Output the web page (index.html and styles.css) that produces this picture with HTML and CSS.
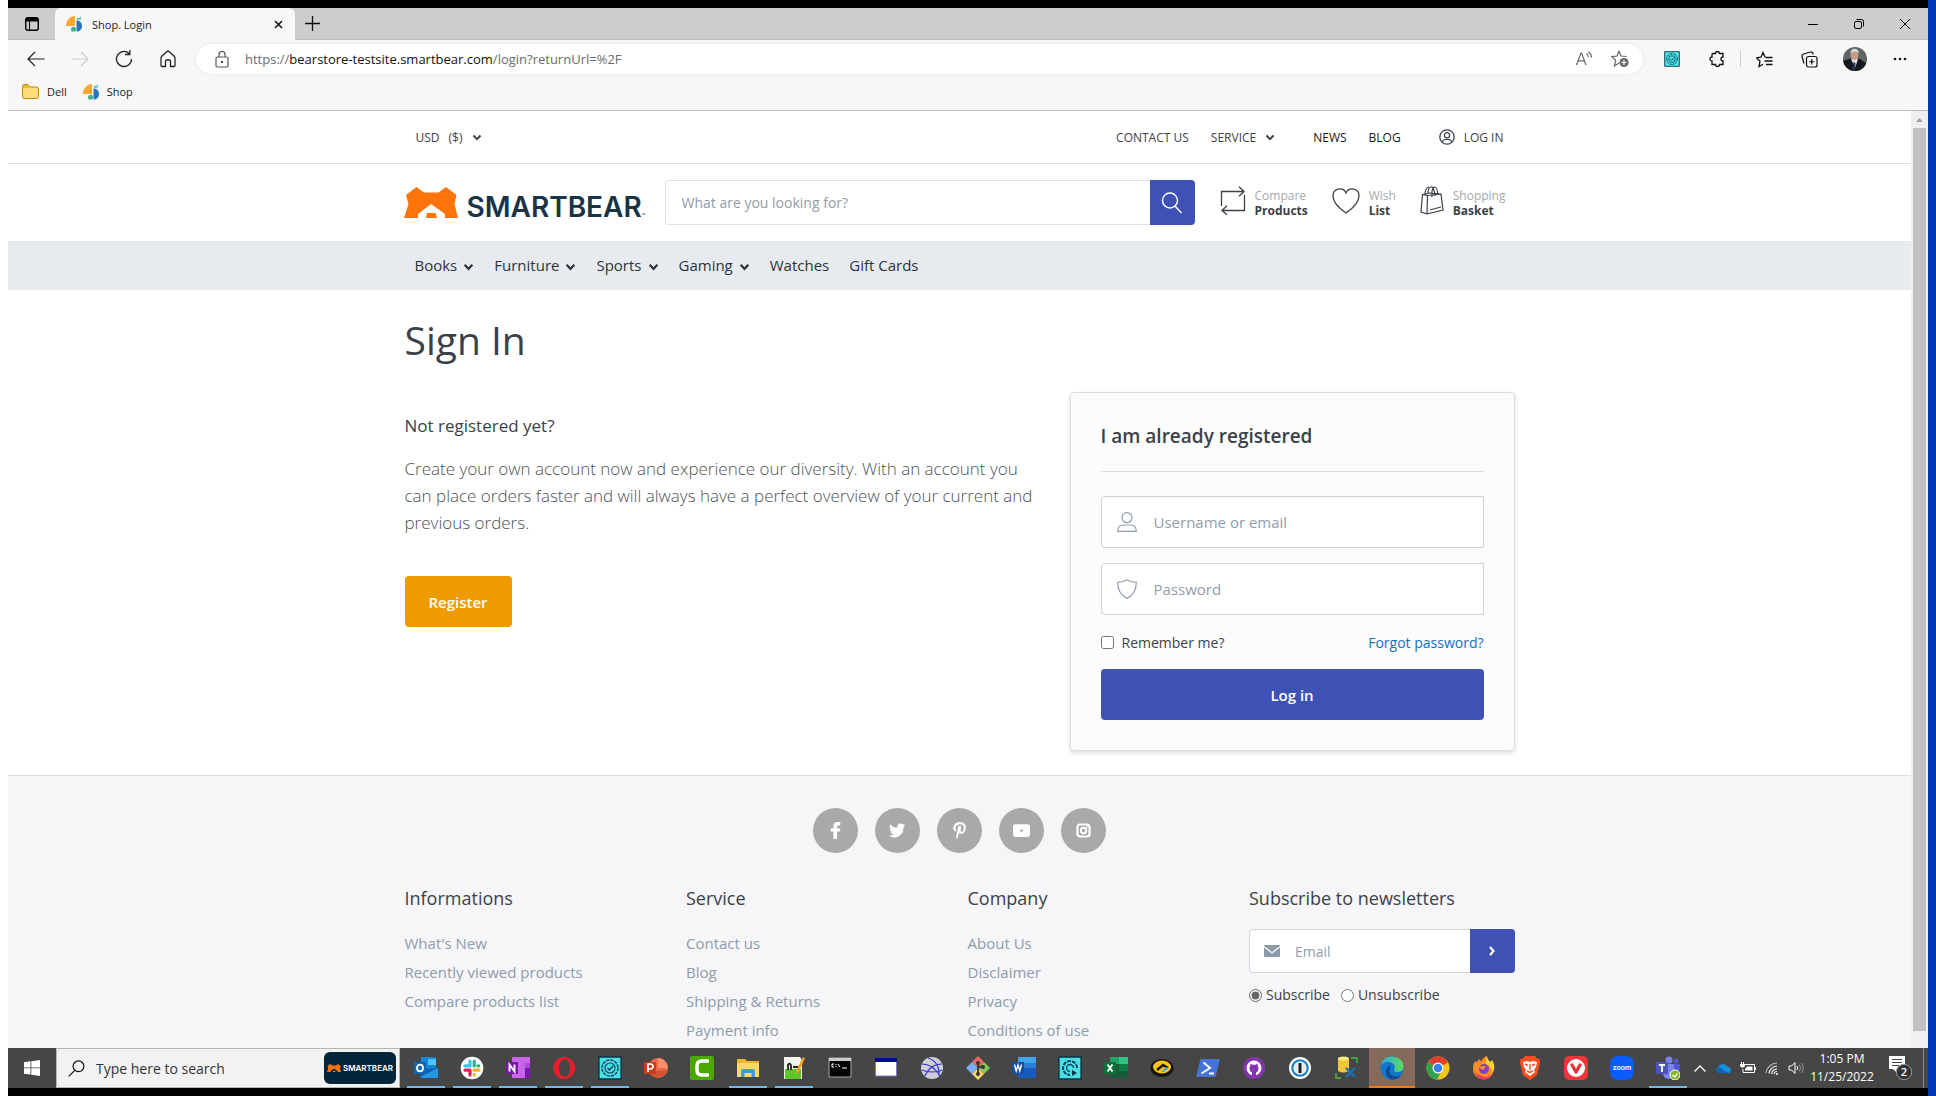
FILE: index.html
```
<!DOCTYPE html>
<html lang="en">
<head>
<meta charset="utf-8">
<title>Shop. Login</title>
<link rel="stylesheet" href="styles.css">
</head>
<body>
<svg class="sprite" aria-hidden="true">
  <symbol id="chev" viewBox="0 0 10 10"><path d="M1.500 3.500 5 7.100 8.500 3.500" fill="none" stroke="currentColor" stroke-width="2"/></symbol>
  <symbol id="shop" viewBox="0 0 16 16"><path d="M9 0v10H0C0 4.500 4 0 9 0z" fill="#f8a832"/><path d="M10.500 4.500c3 0 5.500 2 5.500 5.500s-2.500 5.500-5.500 5.500z" fill="#2b74b8"/><path d="M11 1.500A3 3 0 0 0 15 0v3.500l-4 .5z" fill="#54c3c0"/><circle cx="7.500" cy="13.300" r="2.500" fill="#3fb08a"/></symbol>
  <symbol id="bear" viewBox="0 0 54 31"><path d="M12.500 0 20 5.500h14.500L42 0l10.500 8-2 9L54 31H41v-4L27 17 14 27v4H0l4.500-14-2.500-9z" fill="#ff730b"/><path d="M23 26h8.500l1.500 5H22z" fill="#ff730b"/></symbol>
  <symbol id="seal" viewBox="0 0 24 24"><path d="M1 1h22v22H1z" fill="#4be0e8" stroke="#0c3444" stroke-width="1.300"/><circle cx="12" cy="12" r="8" fill="none" stroke="#0c4658" stroke-width="1.500" stroke-dasharray="3.200 1"/><circle cx="12" cy="12" r="5" fill="none" stroke="#0c4658" stroke-width="1.200"/><path d="m9.500 12 2 2 3.500-4" fill="none" stroke="#0c4658" stroke-width="1.400"/></symbol>
</svg>
<div class="desktop">
<div class="screen">

  <header class="browser">
    <div class="tabs">
      <button class="tabs-menu" aria-label="Tab actions"><svg width="14" height="14" viewBox="0 0 14 14"><rect x=".75" y=".75" width="12.500" height="12.500" rx="2" fill="none" stroke="#000" stroke-width="1.400"/><path d="M1 1h12v3.500H1z"/><path d="M4.500 4v9" stroke="#000"/></svg></button>
      <div class="tab"><svg width="16" height="16"><use href="#shop"/></svg><span>Shop. Login</span><button aria-label="Close tab"><svg width="9" height="9" viewBox="0 0 9 9"><path d="m1 1 7 7m0-7-7 7" stroke="#111" stroke-width="1.500"/></svg></button></div>
      <button class="new-tab" aria-label="New tab"><svg width="15" height="15" viewBox="0 0 15 15"><path d="M7.500 0v15M0 7.500h15" stroke="#111" stroke-width="1.300"/></svg></button>
      <div class="window-buttons">
        <button aria-label="Minimize"><svg width="10" height="10" viewBox="0 0 10 10"><path d="M0 5.500h10" stroke="#000"/></svg></button>
        <button aria-label="Restore"><svg width="10" height="10" viewBox="0 0 10 10"><rect x=".5" y="2.500" width="7" height="7" rx="1.500" fill="none" stroke="#000"/><path d="M2.500 .5h5a2 2 0 0 1 2 2v5" fill="none" stroke="#000"/></svg></button>
        <button aria-label="Close"><svg width="10" height="10" viewBox="0 0 10 10"><path d="m0 0 10 10M10 0 0 10" stroke="#000"/></svg></button>
      </div>
    </div>
    <div class="toolbar">
      <div class="nav-buttons">
        <button aria-label="Back"><svg width="18" height="16" viewBox="0 0 18 16"><path d="M8 1 1 8l7 7M1 8h16.500" fill="none" stroke="#222" stroke-width="1.200"/></svg></button>
        <button aria-label="Forward"><svg width="18" height="16" viewBox="0 0 18 16"><path d="m10 1 7 7-7 7m7-7H.5" fill="none" stroke="#ccc" stroke-width="1.200"/></svg></button>
        <button aria-label="Refresh"><svg width="18" height="18" viewBox="0 0 18 18"><path d="M16.500 9A7.500 7.500 0 1 1 14 3.400M14.800 0v4.500H10" fill="none" stroke="#222" stroke-width="1.300"/></svg></button>
        <button aria-label="Home"><svg width="16" height="18" viewBox="0 0 16 18"><path d="M1 8q0-1 1-2l5-4.500q1-1 2 0L14 6q1 1 1 2v7.500q0 1-1 1h-3.500V11q0-1-1-1h-3q-1 0-1 1v5.500H2q-1 0-1-1z" fill="none" stroke="#222" stroke-width="1.300"/></svg></button>
      </div>
      <div class="omnibox">
        <svg width="14" height="17" viewBox="0 0 14 17"><rect x="1" y="6" width="12" height="10" rx="1.500" fill="none" stroke="#555" stroke-width="1.200"/><path d="M4 6V3.500a3 3 0 0 1 6 0V6" fill="none" stroke="#555" stroke-width="1.200"/><circle cx="7" cy="11" r="1"/></svg>
        <div class="url">https://<b>bearstore-testsite.smartbear.com</b>/login?returnUrl=%2F</div>
        <button aria-label="Read aloud"><svg width="16" height="16" viewBox="0 0 16 16"><path d="m.5 14 4.500-12h.6L10 14M2.200 9.800h6.200M10.500 2.500q1.600 1.300 1.800 3.500M12.500 .7Q15.300 3 15.500 6.500" fill="none" stroke="#666" stroke-width="1.200"/></svg></button>
        <button aria-label="Add to favorites"><svg width="18" height="18" viewBox="0 0 18 18"><path d="m8 1 2 5 5.500.5M8 1 6 6l-5.300.6 4 3.700L3.500 16 8 13" fill="none" stroke="#666" stroke-width="1.200"/><circle cx="13" cy="12.500" r="4.600" fill="#666"/><path d="M13 10v5m-2.500-2.500h5" stroke="#fff" stroke-width="1.200"/></svg></button>
      </div>
      <div class="tools">
        <button aria-label="Extension"><svg width="16" height="16"><use href="#seal"/></svg></button>
        <button aria-label="Extensions"><svg width="16" height="16" viewBox="0 0 16 16"><path d="M4 2.500h2.500a2 2 0 0 1 4 0H14V6a2 2 0 0 0 0 4v3.500h-3.500a2 2 0 0 1-4 0H3V10a2 2 0 0 1 0-4V3.500q0-1 1-1z" fill="none" stroke="#111" stroke-width="1.300"/></svg></button>
        <i class="separator"></i>
        <button aria-label="Favorites"><svg width="17" height="17" viewBox="0 0 17 17"><path d="M9 6.200 7 1.500 5 6.200l-4.500.6L4 10.200 3 15.500l4-2.200M9.500 6.500h7M8.500 10H16.500M10 13.500h6.500" fill="none" stroke="#111" stroke-width="1.300"/></svg></button>
        <button aria-label="Collections"><svg width="17" height="17" viewBox="0 0 17 17"><rect x="5.500" y="5.500" width="10.500" height="10.500" rx="2" fill="none" stroke="#111" stroke-width="1.200"/><path d="M3 12.500 1 5.500q-.3-2 1.500-2.500l7-2q2-.3 2.500 1.500l.3 1M10.750 8v5.500M8 10.750h5.500" fill="none" stroke="#111" stroke-width="1.200"/></svg></button>
        <button aria-label="Profile"><svg width="24" height="24" viewBox="0 0 24 24"><defs><clipPath id="av"><circle cx="12" cy="12" r="12"/></clipPath></defs><g clip-path="url(#av)"><path d="M0 0h24v24H0z" fill="#5d6664"/><path d="M0 24V14l9-3 8 1 7 5v7z" fill="#14171d"/><path d="m8 12 3-1 4 1-3 9z" fill="#dfe3ea"/><path d="m10.500 15 2 1-.5 8H9z" fill="#26344f"/><ellipse cx="11.500" cy="8" rx="4" ry="5" fill="#c99b86"/><path d="M7.500 6Q8 1.500 12 1.800T15.500 6Q12 3 7.500 6z" fill="#d8d8d8"/></g></svg></button>
        <button aria-label="Settings"><svg width="14" height="4" viewBox="0 0 14 4"><g fill="#111"><circle cx="2" cy="2" r="1.300"/><circle cx="7" cy="2" r="1.300"/><circle cx="12" cy="2" r="1.300"/></g></svg></button>
      </div>
    </div>
    <div class="bookmarks">
      <a href="#"><svg width="17" height="15" viewBox="0 0 17 15"><path d="M.5 2.500q0-2 2-2H6L8 3h6.500q2 0 2 2v7.500q0 2-2 2h-12q-2 0-2-2z" fill="#ffdd7c" stroke="#b8860b"/><path d="M1 4h5l2-1-2-2H2Q1 1 1 2z" fill="#e8b92a"/></svg>Dell</a>
      <a href="#"><svg width="16" height="16"><use href="#shop"/></svg>Shop</a>
    </div>
  </header>

  <div class="viewport">
    <div class="page">
      <div class="topbar"><div class="container">
        <button class="currency">USD <span>($)</span> <svg width="10" height="10"><use href="#chev"/></svg></button>
        <nav>
          <a href="#">CONTACT US</a>
          <a href="#" class="service">SERVICE <svg width="10" height="10"><use href="#chev"/></svg></a>
          <a href="#" class="strong">NEWS</a>
          <a href="#" class="strong">BLOG</a>
          <a href="#" class="login-link"><svg width="16" height="16" viewBox="0 0 16 16"><circle cx="8" cy="8" r="7.200" fill="none" stroke="currentColor" stroke-width="1.300"/><circle cx="8" cy="6.300" r="2.600" fill="none" stroke="currentColor" stroke-width="1.200"/><path d="M3.400 13q.6-2.500 2.600-2.500h4q2 0 2.600 2.500" fill="none" stroke="currentColor" stroke-width="1.200"/></svg>LOG IN</a>
        </nav>
      </div></div>

      <div class="masthead"><div class="container">
        <a href="#" class="logo" aria-label="SmartBear"><svg width="54" height="31"><use href="#bear"/></svg><span>SMARTBEAR</span><small>™</small></a>
        <form class="search">
          <input type="text" placeholder="What are you looking for?" aria-label="Search">
          <button type="button" aria-label="Search"><svg width="22" height="22" viewBox="0 0 22 22"><circle cx="9" cy="8.500" r="7.500" fill="none" stroke="#fff" stroke-width="1.400"/><path d="m14 14 6.500 7" stroke="#fff" stroke-width="1.400"/></svg></button>
        </form>
        <div class="shop-tools">
          <a href="#"><svg width="26" height="29" viewBox="0 0 26 29"><path d="M1.500 20V5.500H24M19 .7l5 4.800-5 4.800M24.500 9v15.500H2M7 19.700l-5 4.800 5 4.300" fill="none" stroke="currentColor" stroke-width="1.300"/></svg><span>Compare<b>Products</b></span></a>
          <a href="#"><svg width="28" height="26" viewBox="0 0 28 26"><path d="M14 25Q1 16 1 8a6.800 6.800 0 0 1 13-3A6.800 6.800 0 0 1 27 8q0 8-13 17z" fill="none" stroke="currentColor" stroke-width="1.300"/></svg><span>Wish<b>List</b></span></a>
          <a href="#"><svg width="24" height="29" viewBox="0 0 24 29"><path d="m2.500 8.500 7-1.500 11.500 1L23 24 7 28l-6-2zM2.500 8.500l5 1L7 28M7.500 9.500 21 8M8 7.500q0-6 3-6.500t4 9M5 8q0-6 4-7M12 11V5q1-4 3-4t3 8M10 24l11-3" fill="none" stroke="currentColor" stroke-width="1.200"/></svg><span>Shopping<b>Basket</b></span></a>
        </div>
      </div></div>

      <nav class="mainnav"><div class="container">
        <a href="#">Books <svg width="11" height="11"><use href="#chev"/></svg></a>
        <a href="#">Furniture <svg width="11" height="11"><use href="#chev"/></svg></a>
        <a href="#">Sports <svg width="11" height="11"><use href="#chev"/></svg></a>
        <a href="#">Gaming <svg width="11" height="11"><use href="#chev"/></svg></a>
        <a href="#">Watches</a>
        <a href="#">Gift Cards</a>
      </div></nav>

      <main class="container">
        <h1>Sign In</h1>
        <div class="columns">
          <section class="register">
            <h2>Not registered yet?</h2>
            <p>Create your own account now and experience our diversity. With an account you can place orders faster and will always have a perfect overview of your current and previous orders.</p>
            <button class="btn btn-warning">Register</button>
          </section>
          <form class="card">
            <h2>I am already registered</h2>
            <label class="field"><svg width="20" height="20" viewBox="0 0 20 20"><circle cx="10" cy="5.700" r="5" fill="none" stroke="currentColor" stroke-width="1.200"/><path d="M.7 19.400q0-6.400 5.500-6.400h7.600q5.500 0 5.500 6.400z" fill="none" stroke="currentColor" stroke-width="1.200"/></svg><input type="text" placeholder="Username or email" aria-label="Username or email"></label>
            <label class="field"><svg width="20" height="20" viewBox="0 0 20 20"><path d="M10 .7q4 2.600 9.300 2.600Q19.300 15 10 19.400.7 15 .7 3.300 6 3.300 10 .7z" fill="none" stroke="currentColor" stroke-width="1.200"/></svg><input type="password" placeholder="Password" aria-label="Password"></label>
            <div class="options"><label><input type="checkbox"> Remember me?</label><a href="#">Forgot password?</a></div>
            <button type="button" class="btn btn-primary">Log in</button>
          </form>
        </div>
      </main>

      <footer>
        <div class="social">
          <a href="#" aria-label="Facebook"><svg viewBox="0 0 16 16"><path d="M6 16V9H3.500V6H6V4q0-4 4-4h2.500v3H11q-1.500 0-1.500 1.500V6h3L12 9H9.500v7z"/></svg></a>
          <a href="#" aria-label="Twitter"><svg viewBox="0 0 16 16"><path d="M0 13q2.800.1 4.700-1.400-2.300-.2-3-2.300h1.400Q.6 8.500.6 6l1.400.4Q-.3 4.300 1.100 2 4 5.300 7.900 5.400 7.200 1.800 10.500 1.300q1.400 0 2.400 1l2-.8-1.400 1.800 1.900-.5-1.700 1.700Q14 9 11 12T4.900 14.500Q2.300 14.500 0 13z"/></svg></a>
          <a href="#" aria-label="Pinterest"><svg viewBox="0 0 16 16"><path d="M8.400 0Q14 .3 14 5.300 13.400 11 9.500 11q-1.400 0-2-1L6.500 14q-.4 1.300-1.200 2Q4.600 14 5.300 11.500L6.500 6.300Q6.500 3.500 8.400 3.500q2 .3.800 3.300-.7 2.200.8 2.400 2 0 2-4Q11.800 2 8.300 2 4.500 2.400 4.300 6l.6 2-.6 1.200Q2 8.500 2 5.500 2.800.3 8.400 0z"/></svg></a>
          <a href="#" aria-label="YouTube"><svg viewBox="0 0 16 16"><path fill-rule="evenodd" d="M2 2h12q2 0 2 2v8q0 2-2 2H2q-2 0-2-2V4q0-2 2-2zm5 4.500v3.200L10 8z"/></svg></a>
          <a href="#" aria-label="Instagram"><svg viewBox="0 0 16 16"><rect x="2.300" y="2.300" width="11.400" height="11.400" rx="2.600" fill="none" stroke="#fff" stroke-width="2"/><circle cx="8" cy="8" r="2.600" fill="none" stroke="#fff" stroke-width="1.700"/><circle cx="11.300" cy="4.700" r=".8"/></svg></a>
        </div>
        <div class="container foot-cols">
          <section><h3>Informations</h3><a href="#">What's New</a><a href="#">Recently viewed products</a><a href="#">Compare products list</a></section>
          <section><h3>Service</h3><a href="#">Contact us</a><a href="#">Blog</a><a href="#">Shipping &amp; Returns</a><a href="#">Payment info</a></section>
          <section><h3>Company</h3><a href="#">About Us</a><a href="#">Disclaimer</a><a href="#">Privacy</a><a href="#">Conditions of use</a></section>
          <section><h3>Subscribe to newsletters</h3>
            <div class="newsletter"><svg width="16" height="12" viewBox="0 0 16 12"><path d="M0 1q0-1 1-1h14q1 0 1 1L8 7z" fill="#8d9bab"/><path d="m0 2.500 8 6 8-6V11q0 1-1 1H1q-1 0-1-1z" fill="#8d9bab"/></svg><input type="email" placeholder="Email" aria-label="Email"><button aria-label="Send"><svg width="8" height="10" viewBox="0 0 8 10"><path d="m2 1 3.500 4L2 9" fill="none" stroke="#fff" stroke-width="2.200"/></svg></button></div>
            <div class="choices"><label><input type="radio" name="n" checked>Subscribe</label><label><input type="radio" name="n">Unsubscribe</label></div>
          </section>
        </div>
      </footer>
    </div>
    <div class="scrollbar"><svg width="7" height="4" viewBox="0 0 7 4"><path d="M3.500 0 7 4H0z" fill="#a0a0a0"/></svg><i></i></div>
  </div>

  <div class="taskbar">
    <button class="start" aria-label="Start"><svg width="16" height="16" viewBox="0 0 16 16"><path d="M0 2.200 6.500 1.300v6.200H0zM7.300 1.200 16 0v7.500H7.300zM0 8.300h6.500v6.300L0 13.800zM7.300 8.300H16V16l-8.700-1.300z" fill="#fff"/></svg></button>
    <label class="task-search"><svg width="17" height="17" viewBox="0 0 17 17"><circle cx="10.500" cy="6.300" r="5.400" fill="none" stroke="#111" stroke-width="1.200"/><path d="m6.800 10.300-6 6" stroke="#111" stroke-width="1.200"/></svg><input type="text" placeholder="Type here to search" aria-label="Type here to search"><span class="badge"><svg width="14" height="8"><use href="#bear"/></svg>SMARTBEAR</span></label>
    <div class="apps">
      <button class="open" aria-label="Outlook"><svg viewBox="0 0 24 24"><path d="M7 1h15v13H7z" fill="#1684d8"/><path d="M14 3h8v6h-8z" fill="#50c4f5"/><path d="m6 13 18-1v10H8q-2 0-2-2z" fill="#2496e0"/><path d="m24 12-18 9V13z" fill="#0e5fae"/><path d="M0 6h12v12H0z" fill="#0a66b8"/><ellipse cx="6" cy="12" rx="3" ry="3.300" fill="none" stroke="#fff" stroke-width="1.800"/></svg></button>
      <button class="open" aria-label="Slack"><svg viewBox="0 0 24 24"><circle cx="12" cy="12" r="11.300" fill="#fff"/><g stroke-width="3.200" stroke-linecap="round"><path d="M10 5v5M5 9.800h5" stroke="#36c5f0"/><path d="M14.200 5v5M18.800 9.800h-1" stroke="#2eb67d"/><path d="M14 14.200h5M14.200 18.500v.5" stroke="#ecb22e"/><path d="M5 14.200h5M10 14.200v4.800" stroke="#e01e5a"/></g></svg></button>
      <button class="open" aria-label="OneNote"><svg viewBox="0 0 24 24"><path d="M6 1h18v21H6z" fill="#ca64ea"/><path d="M19 7h5v5h-5z" fill="#ae4bd5"/><path d="M19 12h5v10h-5z" fill="#7719aa"/><path d="M0 6h12v12H0z" fill="#7719aa"/><path d="M3.500 15.500v-7l5 7v-7" fill="none" stroke="#fff" stroke-width="1.800"/></svg></button>
      <button class="open" aria-label="Opera"><svg viewBox="0 0 24 24"><path fill-rule="evenodd" d="M12 1a11 11 0 1 1 0 22 11 11 0 0 1 0-22zm1 2.500C9 3.500 7 7 7 12s2 8.500 6 8.500 5-4 5-8.500-1-8.500-5-8.500z" fill="#e81d2c"/></svg></button>
      <button class="open" aria-label="TestComplete"><svg><use href="#seal"/></svg></button>
      <button aria-label="PowerPoint"><svg viewBox="0 0 24 24"><circle cx="14" cy="12" r="10" fill="#ed6c47"/><path d="M14 2a10 10 0 0 1 10 10H14z" fill="#ff8f6b"/><path d="M4.500 14.500h19A10 10 0 0 1 4.500 14.500z" fill="#d35230"/><path d="M0 6h12v12H0z" fill="#c43e1c"/><path d="M4 16V8h2.500a2 2 0 0 1 0 5H4" fill="none" stroke="#fff" stroke-width="1.700"/></svg></button>
      <button aria-label="Camtasia"><svg viewBox="0 0 24 24"><rect width="24" height="24" rx="2" fill="#4ba800"/><path d="M19 5h-7q-5 0-5 5v4q0 5 5 5h7" fill="none" stroke="#fff" stroke-width="3.500"/></svg></button>
      <button class="open" aria-label="File Explorer"><svg viewBox="0 0 24 24"><path d="M1 3h8l2 2h12v15H1z" fill="#eeb430"/><path d="M1 7h22v14H1z" fill="#ffd968"/><path d="M5 21v-6q0-2 2-2h10q2 0 2 2v6h-3.500v-4h-7v4z" fill="#3b9ddd"/></svg></button>
      <button class="open" aria-label="Notepad++"><svg viewBox="0 0 24 24"><path d="M2 1h16l2 3v19H2z" fill="#f4f6ee"/><path d="M3 13h16v10H3z" fill="#5cc726"/><path d="M6 8v6m0-6q3-1 3 2v4m2-3h6" fill="none" stroke="#222" stroke-width="1.800"/><path d="m14 15 7-14 2 1-6 14-3 2z" fill="#f0a020"/></svg></button>
      <button aria-label="Command Prompt"><svg viewBox="0 0 24 24"><path d="M1 2h22v19H1z" fill="#050505" stroke="#aaa"/><path d="M1 2h22v3H1z" fill="#ccc"/><path d="M6 8H4v3h2M8 8v1m0 1v1m2-3 2 3m2 1h5" fill="none" stroke="#fff"/></svg></button>
      <button aria-label="Console"><svg viewBox="0 0 24 24"><path d="M1.500 3h21v17h-21z" fill="#fff" stroke="#777bd0"/><path d="M1 2h22v4H1z" fill="#00108c"/></svg></button>
      <button aria-label="Network"><svg viewBox="0 0 24 24"><circle cx="12" cy="12" r="11" fill="#cfcfd6"/><path d="M2 8q11 0 18 12M22 8Q10 8 5 20M8 2q12 4 11 18M1.500 14q11 4 21 0" fill="none" stroke="#3a36d4" stroke-width="1.200"/></svg></button>
      <button aria-label="Git"><svg viewBox="0 0 24 24"><path d="m12 0 6 6-6 6-6-6z" fill="#e86a64"/><path d="m6 6 6 6-6 6-6-6z" fill="#78b0f5"/><path d="m18 6 6 6-6 6-6-6z" fill="#83c758"/><path d="m12 12 6 6-6 6-6-6z" fill="#f7d76c"/><path d="M12 18V6m0 6 4-2" stroke="#3c3030" stroke-width="1.800"/><circle cx="12" cy="18" r="2" fill="#3c3030"/><circle cx="12" cy="7" r="2" fill="#3c3030"/><circle cx="17" cy="11" r="2" fill="#3c3030"/></svg></button>
      <button aria-label="Word"><svg viewBox="0 0 24 24"><path d="M6 1h18v21H6z" fill="#185abd"/><path d="M6 1h18v6H6z" fill="#41a5ee"/><path d="M6 7h18v5H6z" fill="#2b7cd3"/><path d="M0 6h12v12H0z" fill="#1650a4"/><path d="m2.500 8.500 1.700 6.500L6 9l1.800 6 1.700-6.500" fill="none" stroke="#fff" stroke-width="1.400"/></svg></button>
      <button aria-label="ReadyAPI"><svg viewBox="0 0 24 24"><path d="M1 1h22v22H1z" fill="#4be0e8" stroke="#0c3444" stroke-width="1.300"/><path d="M19 12a7 7 0 1 0-7 7" fill="none" stroke="#0c4658" stroke-width="2" stroke-dasharray="4 1"/><path d="M15.500 12a3.500 3.500 0 1 0-3.500 3.500" fill="none" stroke="#0c4658" stroke-width="1.300"/><path d="m14 14 5 3-5 3z" fill="#0c3444"/></svg></button>
      <button aria-label="Excel"><svg viewBox="0 0 24 24"><path d="M6 1h18v21H6z" fill="#185c37"/><path d="M6 1h9v7H6z" fill="#21a366"/><path d="M15 1h9v7h-9z" fill="#33c481"/><path d="M15 8h9v7h-9z" fill="#107c41"/><path d="M0 6h12v12H0z" fill="#0f7038"/><path d="m3.500 8.500 5 7m0-7-5 7" stroke="#fff" stroke-width="1.800"/></svg></button>
      <button aria-label="SQL tool"><svg viewBox="0 0 24 24"><ellipse cx="12" cy="12" rx="11.500" ry="9" fill="#171512"/><ellipse cx="12" cy="11" rx="9" ry="6.500" fill="#fec70c"/><path d="m7 14 6-5 5 3" fill="none" stroke="#171512" stroke-width="2.500"/><path d="m11 16 5-5 3 1-5 4z" fill="#4fa9e6"/></svg></button>
      <button aria-label="PowerShell"><svg viewBox="0 0 24 24"><path d="M4.500 3H24l-4.500 18H0z" fill="#4474d8"/><path d="m7.500 6.500 6.500 5.500-8.500 5.500M13 17.500h5" fill="none" stroke="#fff" stroke-width="2"/></svg></button>
      <button aria-label="GitHub Desktop"><svg viewBox="0 0 24 24"><circle cx="12" cy="12" r="11" fill="#8534b0"/><circle cx="12" cy="12" r="7.500" fill="#fff"/><path d="M10 21v-4.500Q7.500 15.500 7.500 12q0-1.300.8-2.200V7.500l2.200 1.200h3l2.200-1.200v2.300q.8.900.8 2.200 0 3.500-2.500 4.500V21z" fill="#8534b0"/></svg></button>
      <button aria-label="1Password"><svg viewBox="0 0 24 24"><circle cx="12" cy="12" r="11" fill="#fff"/><circle cx="12" cy="12" r="7.700" fill="#e9edf0" stroke="#147bc8" stroke-width="2"/><path d="M12 7v10" stroke="#222" stroke-width="3"/></svg></button>
      <button aria-label="Data Studio"><svg viewBox="0 0 24 24"><path d="M4 2v13q5 3 11 0V2z" fill="#f7c437"/><ellipse cx="9.500" cy="2.500" rx="5.500" ry="2" fill="#ffe78a"/><path d="M17 2h6v5M2 17v5h5" fill="none" stroke="#46a044" stroke-width="1.800"/><path d="m12 12 9 9m0-9-9 9" stroke="#1670bd" stroke-width="2.300"/></svg></button>
      <button class="current" aria-label="Edge"><svg viewBox="0 0 24 24"><defs><linearGradient id="eg"><stop offset="0" stop-color="#2aa8e8"/><stop offset="1" stop-color="#5fdb5b"/></linearGradient></defs><circle cx="12" cy="12" r="11.500" fill="#1276cc"/><path d="M.7 10Q2 .5 12 .5 23.500 1.500 23.500 10q0 6-6.500 6-3 0-3-2 1.500-2 .5-4.500Q12.500 6 8 6 3 6 .7 10z" fill="url(#eg)"/><path d="M9.500 13q-.5 6.500 6 7.500 3 .2 6-1.500-4 5-10 4.500Q5.500 21 6 15q.6-5 5-6-1.500 1.500-1.500 4z" fill="#0c4a94"/></svg></button>
      <button aria-label="Chrome"><svg viewBox="0 0 24 24"><circle cx="12" cy="12" r="11.500" fill="#fbc518"/><path d="M12 12 2.200 6A11.500 11.500 0 0 1 22 6.500z" fill="#e33b2e"/><path d="m12 12-9.800-6A11.500 11.500 0 0 0 11 23.500l5-9z" fill="#2fa24c"/><circle cx="12" cy="12" r="5.500" fill="#fff"/><circle cx="12" cy="12" r="4.300" fill="#3b7ff0"/></svg></button>
      <button aria-label="Firefox"><svg viewBox="0 0 24 24"><path d="M3 5q1 1 2 1 1-2 3-3l1 3q2-5 6-6 0 4 4 6l1-2q3 5 2 9-2 10-10.500 10.500Q1 22 1 13q0-5 2-8z" fill="#ff8d25"/><path d="M15 0q0 4 4 6l1-2q3 5 2 9-1 3-2 4 0-7-6-9-1-4 1-8z" fill="#ffd335"/><path d="M2 16q4 7 10 7.500Q18 23 21 18q-4 4-9 3T2 16z" fill="#f5316b"/><circle cx="12" cy="13" r="5" fill="#8041c4"/><path d="M7 11q4-2 8 0-3 0-3 3-3 0-5-3z" fill="#ff8d25"/></svg></button>
      <button aria-label="Brave"><svg viewBox="0 0 24 24"><path d="M7 0h10l2 2.500 2.500.5L22 7l-3 12-7 5-7-5L2 7l.5-4L5 2.500z" fill="#fb4d20"/><path d="m5 6 4-1 3 1 3-1 4 1-1 5-2 3 1 2-5 4-5-4 1-2-2-3z" fill="#fff"/><path d="m7 8 3 1.500M17 8l-3 1.500M12 8v6m-3 1 3 1.500 3-1.500" stroke="#fb4d20" stroke-width="1.400" fill="none"/></svg></button>
      <button aria-label="Vivaldi"><svg viewBox="0 0 24 24"><rect width="24" height="24" rx="5" fill="#ee3438"/><circle cx="12" cy="12" r="9" fill="#fff"/><path d="m8 9 4 7 4-7" fill="none" stroke="#ee3438" stroke-width="3.400" stroke-linecap="round" stroke-linejoin="round"/></svg></button>
      <button aria-label="Zoom"><svg viewBox="0 0 24 24"><rect width="24" height="24" rx="8" fill="#0b5cff"/><text x="12" y="14" text-anchor="middle" class="zoom-text">zoom</text></svg></button>
      <button class="open" aria-label="Teams"><svg viewBox="0 0 24 24"><circle cx="13" cy="4" r="3.500" fill="#7b83eb"/><circle cx="20" cy="5" r="2.500" fill="#5059c9"/><path d="M7 8h11v9q-1 6-6 6-5-1-5-6z" fill="#7b83eb"/><path d="M18 8h6v7q-1 4-6 4z" fill="#5059c9"/><path d="M0 6h12v12H0z" fill="#4b53bc"/><path d="M3 9h6M6 9v7" stroke="#fff" stroke-width="1.800"/><circle cx="19" cy="19" r="5" fill="#7fba1c" stroke="#fff"/><path d="m16.500 19 2 2 3-3.500" fill="none" stroke="#fff" stroke-width="1.400"/></svg></button>
    </div>
    <div class="tray">
      <svg width="12" height="7" viewBox="0 0 12 7"><path d="m.5 6.500 5.500-5.500 5.500 5.500" fill="none" stroke="#fff" stroke-width="1.300"/></svg>
      <svg width="16" height="10" viewBox="0 0 16 10"><path d="M4 10a3.500 3.500 0 0 1-.5-6.500A5 5 0 0 1 12.500 4 3 3 0 0 1 13 10z" fill="#1490df"/><path d="M4 10a3.500 3.500 0 0 1-.5-6.500L13 10z" fill="#0a63b5"/></svg>
      <svg width="16" height="12" viewBox="0 0 16 12"><path d="M5 2.500h9.500v8H3V7" fill="none" stroke="#fff"/><path d="M7 4.500h5.500v4H5V7zM15 5h1v3h-1zM0 2h5v2L3.500 5.500h-2L0 4zM1 0h1v2H1zM3 0h1v2H3z" fill="#fff"/></svg>
      <svg width="14" height="14" viewBox="0 0 14 14"><g fill="none" stroke="#fff" stroke-width="1.100"><path d="M1 12A11.500 11.500 0 0 1 12 2" stroke="#bbb"/><path d="M4 12.500A8.500 8.500 0 0 1 12 5M6.500 13A6 6 0 0 1 12 8M9 13.200a3 3 0 0 1 3-2.700"/></g><circle cx="12" cy="13" r="1" fill="#fff"/></svg>
      <svg width="17" height="14" viewBox="0 0 17 14"><path d="M1 5h2.500L7 1.500v11L3.500 9H1z" fill="none" stroke="#fff"/><path d="M9 5q1.200 2 0 4" fill="none" stroke="#fff"/><path d="M11.300 3.500q2.400 3.500 0 7M13.500 2q3.500 5 0 10" fill="none" stroke="#999"/></svg>
    </div>
    <time class="clock"><span>1:05 PM</span><span>11/25/2022</span></time>
    <button class="notify" aria-label="2 notifications"><svg width="24" height="24" viewBox="0 0 24 24"><path d="M0 0h16v13H8v4l-4-4H0z" fill="#fff"/><path d="M3 3.500h10M3 6.500h10M3 9.500h7" stroke="#464646"/><circle cx="15" cy="16" r="7.700" fill="#333" stroke="#999"/><text x="15" y="20" text-anchor="middle" class="notify-text">2</text></svg></button>
    <i class="peek"></i>
  </div>
</div>
</div>
</body>
</html>
```
FILE: styles.css
```
* { box-sizing: border-box; }
body { margin: 0; font-family: "Open Sans", "Noto Sans", sans-serif; font-size: 15px; color: #3b4148; background: #fff; }
button { border: 0; padding: 0; background: none; font: inherit; color: inherit; display: flex; align-items: center; justify-content: center; }
input { font: inherit; color: inherit; margin: 0; min-width: 0; }
a { color: inherit; text-decoration: none; }
h1, h2, h3, p { margin: 0; }
svg { flex: none; display: block; }
.sprite { position: absolute; width: 0; height: 0; }

.desktop { height: 100vh; border: solid #fff; border-width: 0 0 0 8px; display: flex; background: #0037b4; padding-right: 8px; }
.screen { flex: 1; min-width: 0; display: flex; flex-direction: column; border: solid #000; border-width: 8px 0; background: #fff; }

/* Browser chrome */
.browser { background: #f7f7f7; border-bottom: 1px solid #bdbdbd; font-size: 11px; color: #222; }
.tabs { display: flex; height: 32px; background: #cdcdcd; border-bottom: 1px solid #bdbdbd; }
.tabs-menu { width: 47px; }
.tab { width: 240px; margin-bottom: -1px; background: #f7f7f7; border-radius: 6px 6px 0 0; display: flex; align-items: center; gap: 10px; padding: 0 12px 0 11px; }
.tab span { flex: 1; }
.new-tab { width: 34px; }
.window-buttons { margin-left: auto; display: flex; }
.window-buttons button { width: 46px; }
.toolbar { display: flex; align-items: center; height: 38px; padding-right: 6px; }
.nav-buttons { display: flex; padding: 0 6px; }
.nav-buttons button { width: 44px; }
.omnibox { flex: 1; height: 30px; background: #fff; border-radius: 15px; box-shadow: 0 0 3px #ddd; display: flex; align-items: center; padding: 0 5px 0 19px; color: #6d6d6d; }
.omnibox button { width: 36px; }
.url { flex: 1; padding-left: 16px; font-size: 13px; }
.url b { font-weight: 400; color: #111; }
.tools { display: flex; align-items: center; padding-left: 6px; }
.tools button { width: 45px; }
.separator { width: 1px; height: 16px; background: #ccc; margin: 0 1px; }
.bookmarks { display: flex; gap: 16px; height: 32px; padding: 0 14px 5px; }
.bookmarks a { display: flex; align-items: center; gap: 8px; }

/* Page */
.viewport { flex: 1; min-height: 0; display: flex; overflow: hidden; }
.page { flex: 1; min-width: 0; }
.scrollbar { width: 17px; background: #f0f0f0; padding: 7px 2px 17px; display: flex; flex-direction: column; align-items: center; gap: 6px; }
.scrollbar i { flex: 1; width: 13px; background: #c1c1c1; }
.container { max-width: 1110px; margin: 0 auto; display: flex; align-items: center; }

.topbar { border-bottom: 1px solid #dcdddf; font-size: 12px; }
.topbar .container { height: 52px; padding: 0 11px; justify-content: space-between; }
.topbar nav { display: flex; align-items: center; gap: 22px; }
.topbar a, .currency { display: flex; align-items: center; gap: 9px; }
.topbar .service { margin-right: 16px; }
.topbar .login-link { margin-left: 16px; }
.topbar .strong { color: #16191c; font-weight: 500; }

.masthead .container { height: 77px; }
.logo { display: flex; align-items: flex-end; width: 261px; margin-left: -1px; }
.logo span { font: 600 28px/22px Inter, sans-serif; color: #183446; margin-left: 9px; }
.logo small { font-size: 5px; }
.search { flex: 1; display: flex; height: 45px; }
.search input { flex: 1; border: 1px solid #dfe1e4; border-right: 0; border-radius: 4px 0 0 4px; padding: 0 16px; font-size: 14px; }
.search button { width: 45px; background: #3f51b5; border-radius: 0 4px 4px 0; }
::placeholder { color: #919daa; opacity: 1; }
.shop-tools { width: 320px; padding: 0 9px 4px 25px; display: flex; justify-content: space-between; font-size: 12px; line-height: 15px; color: #a5a8ab; }
.shop-tools a { display: flex; align-items: center; gap: 9px; }
.shop-tools svg, .shop-tools b { color: #3b4148; }
.shop-tools b { display: block; }
.shop-tools span { padding-top: 4px; }

.mainnav { background: #e7ebf0; font-weight: 500; color: #2d333a; }
.mainnav .container { height: 49px; padding: 0 10px 2px; gap: 20px; }
.mainnav a { display: flex; align-items: center; gap: 6px; }
.mainnav svg { margin-top: 3px; }

main.container { display: block; padding: 22px 0 24px; }
h1 { font-weight: 400; font-size: 39px; line-height: 56px; margin-bottom: 24px; }
.columns { display: grid; grid-template-columns: minmax(0, 1fr) 445px; gap: 30px; }
.register h2 { font-weight: 400; font-size: 17px; line-height: 24px; margin: 22px 0 17px; }
.register p { font-size: 17px; line-height: 27px; font-weight: 300; color: #4d5257; margin-bottom: 40px; }
.btn { height: 51px; border-radius: 4px; color: #fff; font-weight: 600; font-size: 15px; padding: 0 24px; }
.btn-warning { background: #ee9b00; }
.btn-primary { background: #3f51b5; width: 100%; }
.card { background: #fcfcfc; border: 1px solid #dcdddf; border-radius: 4px; box-shadow: 0 2px 4px rgba(0, 0, 0, .14); padding: 30px; }
.card h2 { font-weight: 600; font-size: 19px; line-height: 26px; padding-bottom: 22px; border-bottom: 1px solid #dcdddf; margin-bottom: 24px; }
.field { display: flex; align-items: center; height: 52px; border: 1px solid #cdd3da; border-radius: 4px 0 0 4px; background: #fff; color: #919daa; padding: 0 15px; gap: 15px; margin-bottom: 15px; }
.field input { flex: 1; border: 0; background: none; outline: 0; font-size: 15px; }
.options { display: flex; justify-content: space-between; align-items: center; height: 22px; margin: 16px 0; font-size: 14px; }
.options label { display: flex; align-items: center; gap: 8px; }
.options a { color: #1170c4; }

footer { border-top: 1px solid #dcdddf; background: #f6f6f9; padding: 32px 0 60px; }
.social { display: flex; justify-content: center; gap: 17px; }
.social a { width: 45px; height: 45px; border-radius: 50%; background: #a9a9a9; display: flex; align-items: center; justify-content: center; }
.social svg { width: 17px; height: 17px; fill: #fff; }
.foot-cols { margin-top: 33px; display: grid; grid-template-columns: repeat(4, minmax(0, 1fr)); gap: 16px; align-items: start; }
.foot-cols h3 { font-weight: 400; font-size: 18px; line-height: 24px; margin-bottom: 19px; }
.foot-cols section > a { display: block; line-height: 29px; font-size: 15px; color: #8d9bab; }
.newsletter { display: flex; align-items: center; height: 44px; background: #fff; border: 1px solid #cdd3da; border-radius: 4px; padding-left: 14px; gap: 13px; }
.newsletter input { flex: 1; border: 0; background: none; font-size: 14px; }
.newsletter button { width: 45px; height: 44px; margin: -1px; background: #3f51b5; border-radius: 0 4px 4px 0; }
.choices { display: flex; gap: 11px; margin-top: 12px; font-size: 14px; line-height: 20px; }
.choices label { display: flex; align-items: center; gap: 4px; }
.choices input { accent-color: #666; }

/* Taskbar */
.taskbar { display: flex; height: 40px; background: #464646; color: #fff; }
.start { width: 48px; }
.task-search { width: 344px; background: #f2f2f2; border: 1px solid #b5b5b5; display: flex; align-items: center; gap: 9px; padding: 0 3px 0 11px; color: #222; }
.task-search input { flex: 1; border: 0; background: none; font-size: 14px; }
.task-search ::placeholder { color: #333; }
.badge { width: 72px; height: 32px; border-radius: 6px; background: #05263a; color: #fff; font: 600 8px Inter, sans-serif; display: flex; align-items: center; justify-content: center; gap: 2px; }
.apps { display: flex; margin-left: 3px; }
.apps button { width: 46px; padding-top: 2px; border-bottom: 2px solid transparent; }
.apps svg { width: 24px; height: 24px; }
.apps .open { background: linear-gradient(#76b9ed, #76b9ed) center bottom / 38px 2px no-repeat; background-origin: border-box; background-clip: border-box; }
.apps .current { background: #85695a; border-color: #ff7a00; }
.zoom-text { font: 600 7px Inter, sans-serif; fill: #fff; }
.tray { display: flex; align-items: center; gap: 9px; margin-left: auto; }
.clock { width: 74px; display: flex; flex-direction: column; align-items: center; justify-content: center; font-size: 12px; line-height: 18px; }
.notify { width: 43px; margin-right: 1px; }
.notify-text { font: 600 11px "Open Sans", sans-serif; fill: #fff; }
.peek { width: 5px; border-left: 1px solid #888; }
```
